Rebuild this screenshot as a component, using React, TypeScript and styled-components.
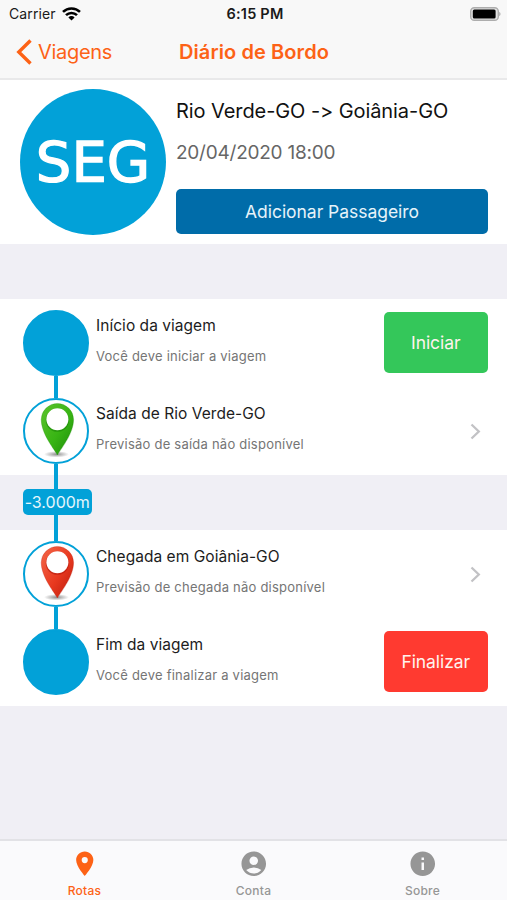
import React from "react";
import styled, { createGlobalStyle } from "styled-components";
import { MdAccountCircle, MdInfo, MdPlace } from "react-icons/md";

const orange = "#fd6216";
const blue = "#02a1d8";

const GlobalStyle = createGlobalStyle`
  * { box-sizing: border-box; }
  body {
    margin: 0;
    font-family: Inter, "Liberation Sans", sans-serif;
    font-feature-settings: "calt" 0;
    background: #f0eff5;
  }
  button { font: inherit; border: 0; padding: 0; cursor: pointer; }
`;

const Screen = styled.div`
  display: flex;
  flex-direction: column;
  width: 507px;
  height: 900px;
  overflow: hidden;
  background: #f0eff5;
`;

const Header = styled.header`
  flex: none;
  height: 80px;
  background: #f8f8f8;
  border-bottom: 2px solid #e9e9ea;
`;

const StatusBar = styled.div`
  display: grid;
  grid-template-columns: 1fr auto 1fr;
  align-items: center;
  height: 26px;
  padding: 0 6px 0 9px;
  font-size: 14px;
  line-height: 27px;
  color: #1a1a1a;
`;

const Carrier = styled.div`
  display: flex;
  align-items: center;
  gap: 6px;
  letter-spacing: 0.1px;
`;

const Clock = styled.div`
  font-size: 14.5px;
  font-weight: 600;
  letter-spacing: 0.2px;
`;

const BatterySlot = styled.div`
  display: flex;
  justify-content: flex-end;
`;

const NavBar = styled.nav`
  display: grid;
  grid-template-columns: 1fr auto 1fr;
  align-items: center;
  height: 52px;
  padding: 0 16px;
  color: ${orange};
  font-size: 20px;
`;

const BackButton = styled.button`
  display: flex;
  align-items: center;
  gap: 6px;
  background: none;
  color: inherit;
  letter-spacing: -0.3px;
`;

const NavTitle = styled.h1`
  margin: 0;
  padding-left: 1px;
  font-size: 20px;
  font-weight: 600;
  letter-spacing: 0.1px;
`;

const Summary = styled.section`
  flex: none;
  display: flex;
  gap: 10px;
  height: 164px;
  padding: 9px 19px 10px 20px;
  background: #fff;
`;

const Avatar = styled.div`
  flex: none;
  display: flex;
  align-items: center;
  justify-content: center;
  width: 146px;
  height: 146px;
  border-radius: 50%;
  background: ${blue};
  color: #fff;
  font: 56px/1 "DejaVu Sans", sans-serif;
  -webkit-text-stroke: 1.3px #fff;
`;

const SummaryBody = styled.div`
  flex: 1;
  display: flex;
  flex-direction: column;
`;

const Route = styled.h2`
  margin: 8px 0 0;
  font-size: 20px;
  font-weight: 400;
  line-height: 28px;
  letter-spacing: -0.08px;
  white-space: nowrap;
  color: #111;
`;

const Departure = styled.div`
  margin-top: 14px;
  font-size: 19px;
  line-height: 28px;
  letter-spacing: -0.23px;
  color: #666;
`;

const AddButton = styled.button`
  height: 45px;
  margin-top: 22px;
  border-radius: 5px;
  background: #006ca9;
  color: #e6f3fa;
  font-size: 17.5px;
  letter-spacing: -0.04px;
`;

const Section = styled.section<{ $top: number }>`
  flex: none;
  margin-top: ${(p) => p.$top}px;
  background: #fff;
`;

const StepRow = styled.div`
  display: flex;
  height: 88px;
  padding: 0 19px 0 23px;
`;

const Rail = styled.div`
  flex: none;
  display: flex;
  flex-direction: column;
  align-items: center;
  width: 66px;
`;

const Track = styled.div<{ $visible: boolean }>`
  flex: 1;
  width: 4px;
  background: ${(p) => (p.$visible ? blue : "transparent")};
`;

const Dot = styled.div<{ $filled: boolean }>`
  flex: none;
  width: 66px;
  height: 66px;
  border: 2px solid ${blue};
  border-radius: 50%;
  background: ${(p) => (p.$filled ? blue : "#fff")};
  svg { display: block; margin: -2px; }
`;

const StepText = styled.div`
  flex: 1;
  padding: 16px 0 0 7px;
  white-space: nowrap;
`;

const StepTitle = styled.div`
  font-size: 15.5px;
  line-height: 22px;
  letter-spacing: 0.04px;
  color: #1c1c1c;
`;

const StepNote = styled.div`
  margin-top: 9px;
  font-size: 13px;
  line-height: 20px;
  letter-spacing: 0.23px;
  color: #757575;
`;

const ActionButton = styled.button<{ $color: string }>`
  margin-top: 13.4px;
  width: 104.5px;
  height: 61px;
  border-radius: 5px;
  background: ${(p) => p.$color};
  color: #fff3ee;
  font-size: 17.5px;
  letter-spacing: -0.08px;
`;

const Disclosure = styled.svg`
  margin: 35.5px 7px 0 0;
`;

const Gap = styled.div`
  flex: none;
  display: flex;
  flex-direction: column;
  align-items: center;
  width: 66px;
  height: 55px;
  margin-left: 23px;
`;

const Distance = styled.div`
  flex: none;
  align-self: flex-start;
  display: flex;
  align-items: center;
  justify-content: center;
  width: 68.5px;
  height: 26px;
  margin-top: -1px;
  border-radius: 5px;
  background: ${blue};
  color: #e6f6fc;
  font-size: 16px;
`;

const TabBar = styled.nav`
  flex: none;
  display: grid;
  grid-template-columns: repeat(3, 1fr);
  height: 61px;
  margin-top: auto;
  border-top: 2px solid #e2e2e6;
  background: #fafafc;
`;

const Tab = styled.a<{ $active?: boolean }>`
  display: flex;
  flex-direction: column;
  align-items: center;
  padding-top: 8px;
  color: ${(p) => (p.$active ? orange : "#969696")};
  font-size: 12px;
  font-weight: 500;
  line-height: 16px;
  letter-spacing: 0.25px;
  svg { margin-bottom: 4px; }
`;

function Wifi() {
  return (
    <svg width="19" height="14" viewBox="0 0 19 14">
      <g fill="none" stroke="#000" strokeWidth="2.6">
        <path d="M1 4.9a12.2 12.2 0 0 1 17 0" />
        <path d="M4 8.2a7.8 7.8 0 0 1 11 0" />
      </g>
      <path d="M9.5 13.6 6.4 10.4a4.4 4.4 0 0 1 6.2 0Z" />
    </svg>
  );
}

function Battery() {
  return (
    <svg width="31" height="14" viewBox="0 0 31 14">
      <rect x=".7" y=".7" width="27.6" height="12.6" rx="3.6" fill="#e4e4e4" stroke="#adadad" strokeWidth="1.4" />
      <rect x="2.8" y="2.5" width="22.8" height="9" rx="1.5" />
      <path d="M29.2 4.8c1.8.7 1.8 3.7 0 4.4Z" fill="#adadad" />
    </svg>
  );
}

function MapPin({ tone }: { tone: "green" | "red" }) {
  const [light, mid, dark] =
    tone === "green" ? ["#5cc42c", "#38b414", "#1b8a08"] : ["#f4684a", "#e8391f", "#b81a0c"];
  return (
    <svg width="66" height="66" viewBox="0 0 66 66">
      <defs>
        <linearGradient id={`${tone}-body`} x1="0" y1="0" x2="1" y2="1">
          <stop offset="0" stopColor={light} />
          <stop offset=".55" stopColor={mid} />
          <stop offset="1" stopColor={dark} />
        </linearGradient>
        <radialGradient id={`${tone}-shadow`}>
          <stop offset="0" stopColor="#333" stopOpacity=".55" />
          <stop offset="1" stopColor="#333" stopOpacity="0" />
        </radialGradient>
      </defs>
      <ellipse cx="33.5" cy="56.3" rx="12.5" ry="3.2" fill={`url(#${tone}-shadow)`} />
      <path
        d="M34.400 57C29.500 49 18.200 35 18.200 21.600a16.200 16.200 0 0 1 32.400 0C50.600 35 39.300 49 34.400 57Z"
        fill={`url(#${tone}-body)`}
        stroke={dark}
        strokeOpacity=".35"
        strokeWidth=".8"
      />
      <circle cx="34.400" cy="22.200" r="11.600" fill={dark} fillOpacity=".65" />
      <circle cx="34.400" cy="21.300" r="11" fill="#fff" />
    </svg>
  );
}

type StepProps = {
  title: string;
  note: string;
  pin?: "green" | "red";
  first?: boolean;
  last?: boolean;
  action?: { label: string; color: string };
};

function Step({ title, note, pin, first, last, action }: StepProps) {
  return (
    <StepRow>
      <Rail>
        <Track $visible={!first} />
        <Dot $filled={!pin}>{pin && <MapPin tone={pin} />}</Dot>
        <Track $visible={!last} />
      </Rail>
      <StepText>
        <StepTitle>{title}</StepTitle>
        <StepNote>{note}</StepNote>
      </StepText>
      {action ? (
        <ActionButton $color={action.color}>{action.label}</ActionButton>
      ) : (
        <Disclosure width="11" height="17" viewBox="0 0 11 17" fill="none" stroke="#c2c2c5" strokeWidth="2.3">
          <path d="M1.500 1.500 8.800 8.500 1.500 15.500" />
        </Disclosure>
      )}
    </StepRow>
  );
}

export default function App() {
  return (
    <Screen>
      <GlobalStyle />
      <Header>
        <StatusBar>
          <Carrier>
            Carrier
            <Wifi />
          </Carrier>
          <Clock>6:15 PM</Clock>
          <BatterySlot>
            <Battery />
          </BatterySlot>
        </StatusBar>
        <NavBar>
          <BackButton>
            <svg width="16" height="26" viewBox="0 0 16 26" fill="none" stroke={orange} strokeWidth="3.4">
              <path d="M14.500 1.500 2.800 13l11.700 11.500" />
            </svg>
            Viagens
          </BackButton>
          <NavTitle>Diário de Bordo</NavTitle>
        </NavBar>
      </Header>

      <Summary>
        <Avatar>SEG</Avatar>
        <SummaryBody>
          <Route>Rio Verde-GO -&gt; Goiânia-GO</Route>
          <Departure>20/04/2020 18:00</Departure>
          <AddButton>Adicionar Passageiro</AddButton>
        </SummaryBody>
      </Summary>

      <Section $top={55}>
        <Step
          first
          title="Início da viagem"
          note="Você deve iniciar a viagem"
          action={{ label: "Iniciar", color: "#34c75a" }}
        />
        <Step pin="green" title="Saída de Rio Verde-GO" note="Previsão de saída não disponível" />
      </Section>
      <Gap>
        <Track $visible />
        <Distance>-3.000m</Distance>
        <Track $visible />
      </Gap>
      <Section $top={0}>
        <Step pin="red" title="Chegada em Goiânia-GO" note="Previsão de chegada não disponível" />
        <Step
          last
          title="Fim da viagem"
          note="Você deve finalizar a viagem"
          action={{ label: "Finalizar", color: "#ff3a30" }}
        />
      </Section>

      <TabBar>
        <Tab $active>
          <MdPlace size={29.5} />
          Rotas
        </Tab>
        <Tab>
          <MdAccountCircle size={29.5} />
          Conta
        </Tab>
        <Tab>
          <MdInfo size={29.5} />
          Sobre
        </Tab>
      </TabBar>
    </Screen>
  );
}
